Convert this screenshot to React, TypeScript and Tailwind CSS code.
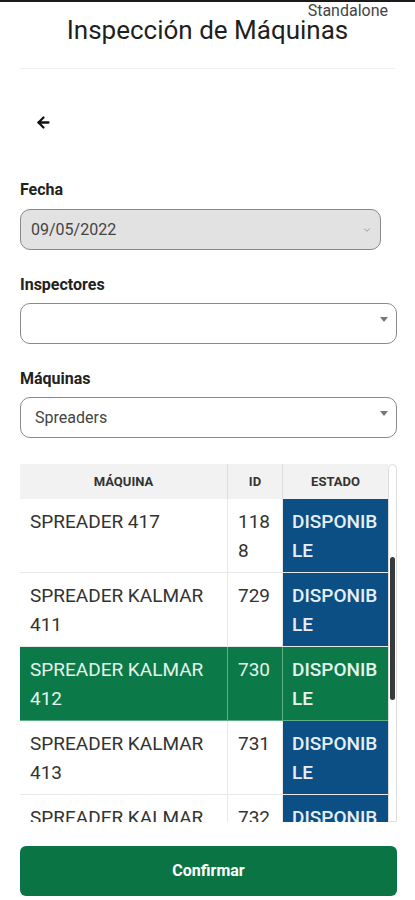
import React from 'react';
import { ArrowLeft, ChevronDown } from 'lucide-react';

type Maquina = {
  nombre: string;
  id: string;
  estado: string;
  selected?: boolean;
};

const maquinas: Maquina[] = [
  { nombre: 'SPREADER 417', id: '1188', estado: 'DISPONIBLE' },
  { nombre: 'SPREADER KALMAR 411', id: '729', estado: 'DISPONIBLE' },
  { nombre: 'SPREADER KALMAR 412', id: '730', estado: 'DISPONIBLE', selected: true },
  { nombre: 'SPREADER KALMAR 413', id: '731', estado: 'DISPONIBLE' },
  { nombre: 'SPREADER KALMAR 414', id: '732', estado: 'DISPONIBLE' },
];

function Caret() {
  return (
    <svg width="8" height="5" viewBox="0 0 8 5" className="absolute right-[8px] top-[13px]">
      <path d="M0 0 L8 0 L4 5 Z" fill="#777" />
    </svg>
  );
}

export default function App() {
  return (
    <div className="relative w-[415px] h-[900px] bg-white overflow-hidden font-['Roboto',sans-serif] text-[#222]">
      {/* status strip */}
      <div className="h-[2px] bg-[#1a1a1a]" />
      <span className="absolute right-[27px] top-[1px] text-[16px] leading-[19px] text-[#444]">
        Standalone
      </span>

      {/* Header */}
      <h1 className="pt-[13px] text-center text-[26px] leading-[30px] text-[#1f1f1f]">
        Inspección de Máquinas
      </h1>
      <div className="mx-5 mt-[23px] h-px bg-[#f1f1f1]" />

      <div className="pl-5 pr-[18px]">
        {/* Back */}
        <div className="mt-[45px] pl-[15px] h-[16px] flex items-center">
          <ArrowLeft className="h-[17px] w-[17px] text-[#111]" strokeWidth={3.2} />
        </div>

        {/* Fecha */}
        <div className="mt-[50px] text-[16px] leading-[20px] font-bold">Fecha</div>
        <div className="mt-[9px] w-[361px] h-[41px] rounded-[10px] border border-[#8a8a8a] bg-[#e2e2e2] flex items-center justify-between pl-[10px] pr-[8px]">
          <span className="text-[16px] text-[#444]">09/05/2022</span>
          <ChevronDown className="h-[10px] w-[10px] text-[#888]" strokeWidth={2} />
        </div>

        {/* Inspectores */}
        <div className="mt-[25px] text-[16px] leading-[20px] font-bold">Inspectores</div>
        <div className="relative mt-[8px] h-[41px] rounded-[10px] border border-[#8a8a8a] bg-white">
          <Caret />
        </div>

        {/* Máquinas */}
        <div className="mt-[25px] text-[16px] leading-[20px] font-bold">Máquinas</div>
        <div className="relative mt-[8px] h-[41px] rounded-[10px] border border-[#8a8a8a] bg-white flex items-center pl-[14px]">
          <span className="text-[16px] text-[#444]">Spreaders</span>
          <Caret />
        </div>

        {/* Table */}
        <div className="mt-[26px] h-[358px] flex overflow-hidden">
          <div className="w-[368px]">
            <div className="flex h-[35px] bg-[#f2f2f2] text-[13px] font-bold text-[#333]">
              <div className="w-[208px] flex items-center justify-center border-r border-[#dedede]">MÁQUINA</div>
              <div className="w-[55px] flex items-center justify-center border-r border-[#dedede]">ID</div>
              <div className="w-[105px] flex items-center justify-center">ESTADO</div>
            </div>
            {maquinas.map((m) => (
              <div
                key={m.id}
                className={`flex text-[19px] leading-[29px] ${
                  m.selected ? 'bg-[#0b7a48] text-[#e6f4ea] border-b border-[#5fae84]' : 'text-[#333] border-b border-[#e8e8e8]'
                }`}
              >
                <div
                  className={`w-[208px] pl-[10px] pr-[6px] pt-[8px] pb-[7px] border-r ${
                    m.selected ? 'border-[#5fae84]' : 'border-[#e8e8e8]'
                  }`}
                >
                  {m.nombre}
                </div>
                <div
                  className={`w-[55px] pl-[10px] pr-[6px] pt-[8px] pb-[7px] break-all border-r ${
                    m.selected ? 'border-[#5fae84]' : 'border-[#e8e8e8]'
                  }`}
                >
                  {m.id}
                </div>
                <div
                  className={`w-[105px] pl-[9px] pr-[8px] pt-[8px] pb-[7px] break-all font-medium ${
                    m.selected ? 'bg-[#0b7a48] text-[#e6f4ea]' : 'bg-[#0b4f85] text-[#e8eef6]'
                  }`}
                >
                  {m.estado}
                </div>
              </div>
            ))}
          </div>
          {/* scrollbar */}
          <div className="w-[9px] border border-[#dcdcdc] rounded-t-full bg-white">
            <div className="mt-[92px] ml-px h-[143px] w-[5px] rounded-full bg-[#3a3a3a]" />
          </div>
        </div>

        {/* Confirmar */}
        <button className="mt-[24px] w-full h-[50px] rounded-[6px] bg-[#0a7445] text-white text-[16px] font-bold">
          Confirmar
        </button>
      </div>
    </div>
  );
}
